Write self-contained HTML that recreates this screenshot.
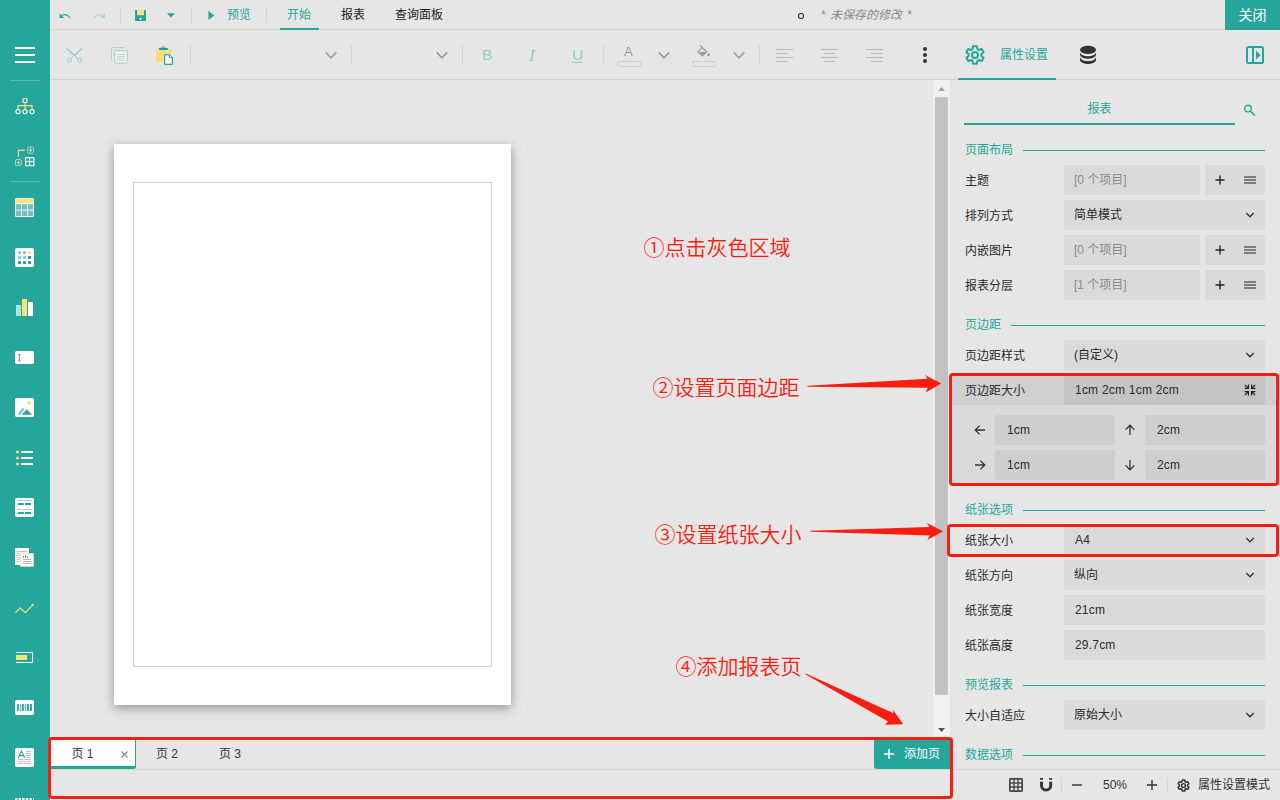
<!DOCTYPE html>
<html lang="zh-CN">
<head>
<meta charset="utf-8">
<title>报表设计器</title>
<style>
*{box-sizing:border-box;margin:0;padding:0}
html,body{width:1280px;height:800px;overflow:hidden;background:#e6e6e6}
body{position:relative;font-family:"Liberation Sans","Noto Sans CJK SC",sans-serif;font-size:13px;color:#333}
.abs{position:absolute}
svg{position:absolute;overflow:visible}
/* sidebar */
#side{position:absolute;left:0;top:0;width:50px;height:800px;background:#26a69a}
#side .sep{position:absolute;left:10px;width:30px;height:1px;background:rgba(255,255,255,.28)}
/* top bar */
#top{position:absolute;left:50px;top:0;width:1230px;height:30px;border-bottom:1px solid #d4d4d4}
#tool{position:absolute;left:50px;top:30px;width:902px;height:50px;border-bottom:1px solid #d4d4d4}
.vsep{position:absolute;width:1px;background:#d5d5d5}
.tab{position:absolute;top:0;height:30px;line-height:31px;font-size:12px;color:#222;white-space:nowrap}
.teal{color:#26a69a}
.pt{top:740px;height:28px;line-height:29px;font-size:12px;color:#333;white-space:nowrap}
.tb{top:14px;font-size:15.5px;line-height:22px;height:22px}
#close{position:absolute;left:1225px;top:0;width:55px;height:30px;background:#26a69a;color:#fff;font-size:14px;line-height:31px;text-align:center}
/* right panel */
#panel{position:absolute;left:952px;top:30px;width:328px;height:770px}
.sect{position:absolute;left:13px;font-size:12px;color:#26a69a;height:16px;line-height:16px;white-space:nowrap}
.sline{position:absolute;height:1px;background:#26a69a;right:15px}
.lbl{position:absolute;left:13px;font-size:12px;color:#2a2a2a;height:30px;line-height:33px;white-space:nowrap}
.fld{position:absolute;left:112px;width:201px;height:30px;background:#dadada;border-radius:2px;font-size:12px;line-height:31px;padding-left:10px;color:#2a2a2a;white-space:nowrap}
.fld.n{padding-left:11px;letter-spacing:.2px}
.fld.s{width:136px;color:#8a8a8a}
.btns{position:absolute;left:253px;width:60px;height:30px;background:#dadada;border-radius:2px}
/* annotation */
.ann{position:absolute;color:#fb1d10;font-family:"Liberation Sans","Noto Sans CJK SC",sans-serif;font-weight:350;font-size:21px;line-height:30px;white-space:nowrap;letter-spacing:0}
.rbox{position:absolute;border:3px solid #fb1d10;border-radius:4px}
</style>
</head>
<body>
<div id="side">
<svg style="left:0;top:0" width="50" height="800" viewBox="0 0 50 800">
<!-- hamburger -->
<path d="M15 48 H35 M15 55 H35 M15 62 H35" stroke="#fff" stroke-width="2"/>
<rect x="10" y="80" width="30" height="1" fill="#5bbdb3"/>
<!-- tree -->
<path d="M25 102.5 V109 M18 109.5 V105.6 H32 V109.5" stroke="#f8e27a" stroke-width="1.2" fill="none"/>
<g stroke="#fff" stroke-width="1.1" fill="none"><circle cx="25" cy="100.4" r="2.1"/><circle cx="18" cy="111.6" r="2.1"/><circle cx="25" cy="111.6" r="2.1"/><circle cx="32" cy="111.6" r="2.1"/></g>
<!-- add element -->
<path d="M18.4 157 V150.4 H24.8" stroke="#f8e27a" stroke-width="1.1" fill="none"/>
<rect x="27.6" y="147.2" width="6" height="6" rx="1.4" fill="none" stroke="#a6dad4" stroke-width="1"/>
<path d="M30.6 148.6 V151.8 M29 150.2 H32.2" stroke="#f8e27a" stroke-width="1.1"/>
<rect x="15.4" y="159.6" width="6" height="6" rx="1.4" fill="none" stroke="#a6dad4" stroke-width="1"/>
<path d="M18.4 161 V164.2 M16.8 162.6 H20" stroke="#f8e27a" stroke-width="1.1"/>
<rect x="25" y="157" width="9.4" height="9.2" fill="#fff"/>
<rect x="26.2" y="158.2" width="3" height="3" fill="#26a69a"/><rect x="30.3" y="158.2" width="3" height="3" fill="#26a69a"/><rect x="26.2" y="162.2" width="3" height="3" fill="#26a69a"/><rect x="30.3" y="162.2" width="3" height="3" fill="#26a69a"/>
<rect x="10" y="181" width="30" height="1" fill="#5bbdb3"/>
<!-- table -->
<rect x="15" y="198" width="19" height="19" rx="1.6" fill="#fff"/>
<rect x="16" y="199" width="17" height="4.2" fill="#f8e27a"/>
<g fill="#6cc3ba"><rect x="16" y="204.2" width="5" height="5.4"/><rect x="22" y="204.2" width="5" height="5.4"/><rect x="28" y="204.2" width="5" height="5.4"/><rect x="16" y="210.6" width="5" height="5.4"/><rect x="22" y="210.6" width="5" height="5.4"/><rect x="28" y="210.6" width="5" height="5.4"/></g>
<!-- tablix -->
<rect x="15" y="248" width="19" height="19" rx="1.8" fill="#fff"/>
<g><rect x="18.1" y="251.2" width="2.8" height="2.7" fill="#7fcbc3"/><rect x="23.1" y="251.2" width="2.8" height="2.7" fill="#7fcbc3"/><rect x="28.1" y="251.2" width="2.8" height="2.7" fill="#f8e27a"/>
<rect x="18.1" y="256.1" width="2.8" height="2.7" fill="#7fcbc3"/><rect x="23.1" y="256.1" width="2.8" height="2.7" fill="#7fcbc3"/><rect x="28.1" y="256.1" width="2.8" height="2.7" fill="#1d9488"/>
<rect x="18.1" y="261.2" width="2.8" height="2.7" fill="#1d9488"/><rect x="23.1" y="261.2" width="2.8" height="2.7" fill="#1d9488"/><rect x="28.1" y="261.2" width="2.8" height="2.7" fill="#1d9488"/></g>
<!-- chart -->
<rect x="16" y="305" width="5" height="11" fill="#b7e1dc"/><rect x="22" y="299" width="5" height="17" fill="#f8e27a"/><rect x="28" y="302" width="5" height="14" fill="#fff"/>
<!-- textbox -->
<rect x="15" y="351" width="19" height="13" rx="1.8" fill="#fff"/>
<path d="M18.2 354.6 H20.6 M18.2 360.8 H20.6 M19.4 354.6 V360.8" stroke="#6a6a6a" stroke-width="0.8" fill="none"/>
<!-- image -->
<rect x="15" y="398" width="19" height="19" rx="1.8" fill="#fff"/>
<circle cx="29" cy="403" r="2" fill="#f8e27a"/>
<path d="M17.4 414.8 L22.6 407.4 L24.4 409 L20.4 414.8 Z" fill="#7fcbc3"/><path d="M21.6 414.8 L26.9 409.2 L32 414.8 Z" fill="#26a69a"/>
<!-- list -->
<circle cx="17.5" cy="452" r="1.5" fill="#f8e27a"/><circle cx="17.5" cy="458" r="1.5" fill="#f8e27a"/><circle cx="17.5" cy="464" r="1.5" fill="#f8e27a"/>
<path d="M21 452 H33 M21 458 H33 M21 464 H33" stroke="#fff" stroke-width="2"/>
<!-- form -->
<rect x="15" y="498" width="19" height="19" rx="1.8" fill="#fff"/>
<path d="M17 500.5 H32 M17 509.5 H32" stroke="#b5b5b5" stroke-width="0.8"/>
<path d="M18 504 H23.8 M25 504 H31 M18 513 H23.8 M25 513 H31" stroke="#26a69a" stroke-width="2"/>
<!-- overflow -->
<rect x="15" y="548" width="14" height="17" fill="#fff"/>
<path d="M17 551.5 H27 M17 553.5 H20 M17 555.5 H20 M17 557.5 H20 M17 559.5 H20 M17 561.5 H20" stroke="#b5b5b5" stroke-width="0.8"/>
<rect x="20.5" y="553.5" width="13" height="13" fill="#fff" stroke="#f8e27a" stroke-width="1" stroke-dasharray="1.6 1"/>
<path d="M23.5 556 V557.8 M25.5 555.2 V557.8 M27.5 556.4 V557.8" stroke="#26a69a" stroke-width="1.1"/>
<path d="M23 559.5 H31 M23 561.5 H31 M23 563.5 H31" stroke="#a8a8a8" stroke-width="0.8"/>
<!-- sparkline -->
<path d="M15.3 612.8 L20.3 607.8 L25.3 612.6 L32.8 604.8" stroke="#f8e27a" stroke-width="1.1" fill="none"/><path d="M33.8 603.6 L33.4 606.4 L31.2 604.2 Z" fill="#f8e27a"/>
<!-- bullet -->
<path d="M16 652.5 H32.6 V662.5 H16" stroke="#fff" stroke-width="1" fill="none"/>
<rect x="16" y="655" width="11" height="5" fill="#f8e27a"/>
<!-- barcode -->
<rect x="15" y="700" width="19" height="15" rx="1.8" fill="#fff"/>
<g fill="#26a69a"><rect x="17.1" y="704" width="1.7" height="7"/><rect x="19.8" y="704" width="0.9" height="7"/><rect x="21.9" y="704" width="1.9" height="7"/><rect x="24.8" y="704" width="0.9" height="7"/><rect x="26.9" y="704" width="1.9" height="7"/><rect x="30" y="704" width="1.9" height="7"/></g>
<!-- richtext -->
<rect x="15" y="748" width="19" height="19" rx="1.8" fill="#fff"/>
<path d="M18.3 757.8 L21.5 751 L24.7 757.8 M19.4 755.6 H23.6" stroke="#26a69a" stroke-width="1.1" fill="none"/>
<path d="M26 751.5 H31 M26 753.5 H31 M26 755.5 H31 M26 757.5 H31 M18 759.5 H31 M18 761.5 H31 M18 763.5 H31" stroke="#b5b5b5" stroke-width="0.8"/>
<path d="M15 799 H34" stroke="#fff" stroke-width="2" stroke-dasharray="2.4 1.2"/>
</svg>
</div>
<div id="top">
<svg style="left:9px;top:12px" width="12" height="7" viewBox="0 0 12 7"><path d="M0.500 1.300 V5.900 H5.200 Z" fill="#26a69a"/><path d="M2.800 3.300 C5.500 2.200 8.600 2.300 10.800 5.800" stroke="#26a69a" stroke-width="1.100" fill="none"/></svg>
<svg style="left:44px;top:12px" width="12" height="7" viewBox="0 0 12 7"><path d="M10.900 1.300 V5.900 H6.200 Z" fill="#a3d5cf"/><path d="M8.600 3.300 C5.900 2.200 2.800 2.300 0.600 5.800" stroke="#a3d5cf" stroke-width="1.200" fill="none"/></svg>
<div class="vsep" style="left:70px;top:8px;height:15px"></div>
<svg style="left:85px;top:10px" width="11" height="11" viewBox="0 0 11 11"><rect x="0" y="0" width="11" height="11" rx="0.8" fill="#26a69a"/><rect x="2" y="0" width="7" height="5.2" fill="#f8e27a"/><rect x="3.6" y="7.4" width="3.8" height="3.6" fill="#26a69a"/><circle cx="5.5" cy="8.8" r="1.1" fill="#fff"/></svg>
<svg style="left:117px;top:13px" width="8" height="5" viewBox="0 0 8 5"><path d="M0 0.2 H8 L4 4.4Z" fill="#26a69a"/></svg>
<div class="vsep" style="left:141px;top:8px;height:15px"></div>
<svg style="left:158px;top:11px" width="7" height="9" viewBox="0 0 7 9"><path d="M0.4 0 L6.4 4.4 L0.4 8.8Z" fill="#26a69a"/></svg>
<div class="tab teal" style="left:177px">预览</div>
<div class="vsep" style="left:216px;top:8px;height:15px"></div>
<div class="tab teal" style="left:237px">开始</div>
<div class="abs" style="left:229.500px;top:28px;width:39px;height:2px;background:#26a69a"></div>
<div class="tab" style="left:291px">报表</div>
<div class="tab" style="left:345px">查询面板</div>
<div class="abs" style="left:747.700px;top:12.600px;width:6.300px;height:6.500px;border:1.300px solid #222;border-radius:50%"></div>
<div class="tab" style="left:770px;color:#8a8a8a;font-style:italic;font-weight:400;word-spacing:1.500px;left:770.500px">* 未保存的修改 *</div>
</div>
<div id="close">关闭</div>
<div id="tool">
<svg style="left:16px;top:17px" width="17" height="17" viewBox="0 0 17 17"><g fill="#8fccc5"><path d="M0.800 0.700 L0.800 2.500 L7.500 8.700 L8.900 7.900 Z"/><path d="M15.900 0.700 L15.900 2.500 L9.200 8.700 L7.800 7.900 Z"/></g><g stroke="#8fccc5" stroke-width="0.900" fill="none"><path d="M8 7.900 L12 11.700 M8.700 7.900 L4.700 11.700"/><circle cx="3.400" cy="13.400" r="2"/><circle cx="13.400" cy="13.400" r="2"/></g></svg>
<svg style="left:61px;top:17px" width="18" height="18" viewBox="0 0 18 18"><path d="M0.500 13.600 V0.500 H14" stroke="#a9d8d2" stroke-width="1" fill="none"/><rect x="3.750" y="3.600" width="12.500" height="12.600" rx="0.600" fill="#f0f0f0" stroke="#9dd3cc" stroke-width="1"/><path d="M5.900 7.500 H14 M5.900 9.550 H14 M5.900 11.550 H14 M5.900 13.500 H14" stroke="#c9c9c9" stroke-width="0.900"/></svg>
<svg style="left:106px;top:15px" width="18" height="21" viewBox="0 0 18 21"><rect x="0" y="3" width="15" height="13.900" fill="#f7df7b"/><rect x="2.400" y="2.800" width="10.200" height="2.800" fill="#e6e6e6"/><path d="M3 4.900 V3 H5 A2.400 2.200 0 0 1 9.700 3 H11.800 V4.900 Z" fill="#1f9e92"/><ellipse cx="7.350" cy="2.500" rx="1.200" ry="0.600" fill="#e6e6e6"/><path d="M9.600 9 H13 L17.100 12.800 V18.600 A1.400 1.400 0 0 1 15.700 20 H9.300 A1.400 1.400 0 0 1 7.900 18.600 V10.400 A1.400 1.400 0 0 1 9.300 9 Z" fill="#e9e4d0" stroke="#e9e4d0" stroke-width="1"/><path d="M9.600 9.650 H12.900 L16.450 13 V18.300 A1 1 0 0 1 15.450 19.350 H9.550 A1 1 0 0 1 8.550 18.300 V10.650 A1 1 0 0 1 9.550 9.650 Z" fill="#fff" stroke="#26a69a" stroke-width="1.300" stroke-linejoin="round"/><path d="M12.900 9.650 V12.100 A0.900 0.900 0 0 0 13.800 13 H16.450 Z" fill="#26a69a"/><circle cx="14.400" cy="11.700" r="0.700" fill="#fff"/></svg>
<div class="vsep" style="left:140px;top:15px;height:20px"></div>
<svg style="left:275px;top:21px" width="12" height="8" viewBox="0 0 12 8"><path d="M0.700 1.400 L6 6.900 L11.300 1.400" stroke="#9b9b9b" stroke-width="1.700" fill="none"/></svg>
<div class="vsep" style="left:301px;top:15px;height:20px"></div>
<svg style="left:386px;top:21px" width="12" height="8" viewBox="0 0 12 8"><path d="M0.700 1.400 L6 6.900 L11.300 1.400" stroke="#9b9b9b" stroke-width="1.700" fill="none"/></svg>
<div class="vsep" style="left:412px;top:15px;height:20px"></div>
<div class="abs tb" style="left:432px;color:#8fccc5">B</div>
<div class="abs tb" style="left:479px;top:15px;color:#8fccc5;font-family:'Liberation Serif',serif;font-style:italic;font-size:17px">I</div>
<div class="abs tb" style="left:522px;color:#8fccc5">U</div>
<div class="abs" style="left:522px;top:32px;width:11px;height:1px;background:#8fccc5"></div>
<div class="vsep" style="left:553px;top:15px;height:20px"></div>
<div class="abs tb" style="left:574px;color:#9b9b9b;font-size:13px;top:11px">A</div>
<div class="abs" style="left:567px;top:31px;width:24px;height:6px;border:1px dotted #b9b9b9;border-radius:2px"></div>
<svg style="left:608px;top:21px" width="12" height="8" viewBox="0 0 12 8"><path d="M0.700 1.400 L6 6.900 L11.300 1.400" stroke="#9b9b9b" stroke-width="1.700" fill="none"/></svg>
<svg style="left:647px;top:15px" width="14" height="12" viewBox="0 0 14 12"><path d="M3 0.4 L9.6 6.8 L5.4 10.8 L1 6.6 L5.2 2.6" stroke="#9b9b9b" stroke-width="1.2" fill="none" stroke-linejoin="round"/><path d="M1.6 6.9 H9.3 L5.4 10.6 Z" fill="#9b9b9b"/><path d="M11.6 7.6 C12.4 8.8 12.8 9.4 12.8 10 A1.2 1.2 0 0 1 10.4 10 C10.4 9.4 10.8 8.8 11.6 7.6Z" fill="#9b9b9b"/></svg>
<div class="abs" style="left:642px;top:31px;width:24px;height:6px;border:1px dotted #b9b9b9;border-radius:2px"></div>
<svg style="left:683px;top:21px" width="12" height="8" viewBox="0 0 12 8"><path d="M0.700 1.400 L6 6.900 L11.300 1.400" stroke="#9b9b9b" stroke-width="1.700" fill="none"/></svg>
<div class="vsep" style="left:709px;top:15px;height:20px"></div>
<svg style="left:726px;top:19px" width="17" height="13" viewBox="0 0 17 13"><path d="M0 0.5 H17 M0 4.5 H12 M0 8.5 H17 M0 12.5 H12" stroke="#b8b8b8" stroke-width="1"/></svg>
<svg style="left:771px;top:19px" width="17" height="13" viewBox="0 0 17 13"><path d="M0 0.5 H17 M3 4.5 H14 M0 8.5 H17 M3 12.5 H14" stroke="#b8b8b8" stroke-width="1"/></svg>
<svg style="left:816px;top:19px" width="17" height="13" viewBox="0 0 17 13"><path d="M0 0.5 H17 M5 4.5 H17 M0 8.5 H17 M5 12.5 H17" stroke="#b8b8b8" stroke-width="1"/></svg>
<svg style="left:872px;top:17px" width="6" height="16" viewBox="0 0 6 16"><circle cx="3" cy="2" r="2" fill="#333"/><circle cx="3" cy="8" r="2" fill="#333"/><circle cx="3" cy="14" r="2" fill="#333"/></svg>
</div>
<div id="canvas">
<div class="abs" style="left:114px;top:144px;width:397px;height:561px;background:#fff;box-shadow:0 3px 10px rgba(0,0,0,.36)"></div>
<div class="abs" style="left:133px;top:182px;width:359px;height:485px;border:1px solid #d0d0d0"></div>
<div class="abs" style="left:933px;top:80px;width:17px;height:657px;background:#f1f1f1"></div>
<div class="abs" style="left:935px;top:97px;width:13px;height:598px;background:#c1c1c1"></div>
<svg style="left:933px;top:80px" width="17" height="17"><path d="M5 11 L8.5 7 L12 11Z" fill="#a3a3a3"/></svg>
<svg style="left:933px;top:720px" width="17" height="17"><path d="M5 8 L12 8 L8.5 12Z" fill="#505050"/></svg>
</div>
<div id="panel">
<div class="abs" style="left:0;top:49px;width:328px;height:1px;background:#d4d4d4"></div>
<svg style="left:13px;top:15px" width="20" height="20" viewBox="0 0 20 20"><path d="M7.50 4.22 L8.10 1.20 L11.90 1.20 L12.50 4.22 A6.30 6.30 0 0 1 13.76 4.94 L16.67 3.96 L18.57 7.25 L16.26 9.27 A6.30 6.30 0 0 1 16.26 10.73 L18.57 12.75 L16.67 16.04 L13.76 15.06 A6.30 6.30 0 0 1 12.50 15.78 L11.90 18.80 L8.10 18.80 L7.50 15.78 A6.30 6.30 0 0 1 6.24 15.06 L3.33 16.04 L1.43 12.75 L3.74 10.73 A6.30 6.30 0 0 1 3.74 9.27 L1.43 7.25 L3.33 3.96 L6.24 4.94 A6.30 6.30 0 0 1 7.50 4.22 Z" fill="none" stroke="#26a69a" stroke-width="2" stroke-linejoin="round"/><circle cx="10" cy="10" r="3" fill="none" stroke="#26a69a" stroke-width="2"/></svg>
<div class="abs teal" style="left:48px;top:15px;height:20px;line-height:21px;font-size:12px">属性设置</div>
<div class="abs" style="left:6px;top:48px;width:98px;height:2px;background:#26a69a"></div>
<svg style="left:128px;top:15px" width="16" height="20" viewBox="0 0 16 20"><ellipse cx="8" cy="4.900" rx="8" ry="4.100" fill="#333"/><path d="M0 7.200 A8 4.100 0 0 0 16 7.200 V9.650 A8 4.100 0 0 1 0 9.650 Z" fill="#333"/><path d="M0 12 A8 4.100 0 0 0 16 12 V14.900 A8 4.100 0 0 1 0 14.900 Z" fill="#333"/></svg>
<svg style="left:294px;top:16px" width="18" height="18" viewBox="0 0 18 18"><rect x="1" y="1" width="16" height="16" rx="1.6" fill="none" stroke="#26a69a" stroke-width="2"/><path d="M7 1 V17" stroke="#26a69a" stroke-width="2"/><path d="M10 4.600 L14.600 9 L10 13.400Z" fill="#26a69a"/></svg>
<div class="abs teal" style="left:12px;top:69px;width:271px;height:20px;line-height:21px;font-size:12px;text-align:center">报表</div>
<div class="abs" style="left:12px;top:93px;width:271px;height:2px;background:#26a69a"></div>
<svg style="left:291px;top:74px" width="13" height="13" viewBox="0 0 13 13"><circle cx="5" cy="4.600" r="3.300" fill="none" stroke="#26a69a" stroke-width="1.400"/><path d="M7.400 7.200 L12 11.600" stroke="#26a69a" stroke-width="1.500"/></svg>
<div class="sect" style="top:112px">页面布局</div><div class="sline" style="left:71.0px;top:120px"></div>
<div class="lbl" style="top:135px">主题</div><div class="fld s" style="top:135px">[0 个项目]</div><div class="btns" style="top:135px"></div><svg style="left:263px;top:145px" width="10" height="10" viewBox="0 0 10 10"><path d="M5 0.500 V9.500 M0.500 5 H9.500" stroke="#222" stroke-width="1.400"/></svg><svg style="left:292px;top:146px" width="12" height="8" viewBox="0 0 12 8"><path d="M0 1 H12 M0 4 H12 M0 7 H12" stroke="#222" stroke-width="1.050"/></svg>
<div class="lbl" style="top:170px">排列方式</div><div class="fld" style="top:170px">简单模式</div><svg style="left:293px;top:182px" width="10" height="6" viewBox="0 0 10 6"><path d="M1.200 1 L5 4.800 L8.800 1" stroke="#333" stroke-width="1.300" fill="none"/></svg>
<div class="lbl" style="top:205px">内嵌图片</div><div class="fld s" style="top:205px">[0 个项目]</div><div class="btns" style="top:205px"></div><svg style="left:263px;top:215px" width="10" height="10" viewBox="0 0 10 10"><path d="M5 0.500 V9.500 M0.500 5 H9.500" stroke="#222" stroke-width="1.400"/></svg><svg style="left:292px;top:216px" width="12" height="8" viewBox="0 0 12 8"><path d="M0 1 H12 M0 4 H12 M0 7 H12" stroke="#222" stroke-width="1.050"/></svg>
<div class="lbl" style="top:240px">报表分层</div><div class="fld s" style="top:240px">[1 个项目]</div><div class="btns" style="top:240px"></div><svg style="left:263px;top:250px" width="10" height="10" viewBox="0 0 10 10"><path d="M5 0.500 V9.500 M0.500 5 H9.500" stroke="#222" stroke-width="1.400"/></svg><svg style="left:292px;top:251px" width="12" height="8" viewBox="0 0 12 8"><path d="M0 1 H12 M0 4 H12 M0 7 H12" stroke="#222" stroke-width="1.050"/></svg>
<div class="sect" style="top:287px">页边距</div><div class="sline" style="left:59.0px;top:295px"></div>
<div class="lbl" style="top:310px">页边距样式</div><div class="fld" style="top:310px">(自定义)</div><svg style="left:293px;top:322px" width="10" height="6" viewBox="0 0 10 6"><path d="M1.200 1 L5 4.800 L8.800 1" stroke="#333" stroke-width="1.300" fill="none"/></svg>
<div class="abs" style="left:-2px;top:345px;width:330px;height:30px;background:#d0d0d0"></div>
<div class="abs" style="left:-2px;top:375px;width:330px;height:79px;background:#dadada"></div>
<div class="lbl" style="top:345px">页边距大小</div><div class="fld" style="top:345px;background:#c4c4c4;border-radius:0;padding-left:11px;letter-spacing:.22px">1cm 2cm 1cm 2cm</div>
<svg style="left:292px;top:354px" width="12" height="12" viewBox="0 0 12 12"><path d="M0.600 4.400 H4.400 V0.600 M4.400 4.400 L0.800 0.800 M11.400 4.400 H7.600 V0.600 M7.600 4.400 L11.200 0.800 M0.600 7.600 H4.400 V11.400 M4.400 7.600 L0.800 11.200 M11.400 7.600 H7.600 V11.400 M7.600 7.600 L11.200 11.200" stroke="#222" stroke-width="1.200" fill="none"/></svg>
<div class="fld" style="left:43px;top:385px;width:120px;background:#cecece;padding-left:12px;letter-spacing:.2px">1cm</div><div class="fld" style="left:193px;top:385px;width:120px;background:#cecece;padding-left:12px;letter-spacing:.2px">2cm</div><div class="fld" style="left:43px;top:420px;width:120px;background:#cecece;padding-left:12px;letter-spacing:.2px">1cm</div><div class="fld" style="left:193px;top:420px;width:120px;background:#cecece;padding-left:12px;letter-spacing:.2px">2cm</div>
<svg style="left:22px;top:394px" width="12" height="12" viewBox="0 0 12 12"><g transform="rotate(0 6 6)"><path d="M11 6 H1.400 M5.600 1.600 L1.200 6 L5.600 10.400" stroke="#333" stroke-width="1.300" fill="none"/></g></svg><svg style="left:172px;top:394px" width="12" height="12" viewBox="0 0 12 12"><g transform="rotate(90 6 6)"><path d="M11 6 H1.400 M5.600 1.600 L1.200 6 L5.600 10.400" stroke="#333" stroke-width="1.300" fill="none"/></g></svg><svg style="left:22px;top:429px" width="12" height="12" viewBox="0 0 12 12"><g transform="rotate(180 6 6)"><path d="M11 6 H1.400 M5.600 1.600 L1.200 6 L5.600 10.400" stroke="#333" stroke-width="1.300" fill="none"/></g></svg><svg style="left:172px;top:429px" width="12" height="12" viewBox="0 0 12 12"><g transform="rotate(270 6 6)"><path d="M11 6 H1.400 M5.600 1.600 L1.200 6 L5.600 10.400" stroke="#333" stroke-width="1.300" fill="none"/></g></svg>
<div class="sect" style="top:472px">纸张选项</div><div class="sline" style="left:71.0px;top:480px"></div>
<div class="lbl" style="top:495px">纸张大小</div><div class="fld n" style="top:495px">A4</div><svg style="left:293px;top:507px" width="10" height="6" viewBox="0 0 10 6"><path d="M1.200 1 L5 4.800 L8.800 1" stroke="#333" stroke-width="1.300" fill="none"/></svg>
<div class="lbl" style="top:530px">纸张方向</div><div class="fld" style="top:530px">纵向</div><svg style="left:293px;top:542px" width="10" height="6" viewBox="0 0 10 6"><path d="M1.200 1 L5 4.800 L8.800 1" stroke="#333" stroke-width="1.300" fill="none"/></svg>
<div class="lbl" style="top:565px">纸张宽度</div><div class="fld n" style="top:565px">21cm</div>
<div class="lbl" style="top:600px">纸张高度</div><div class="fld n" style="top:600px">29.7cm</div>
<div class="sect" style="top:647px">预览报表</div><div class="sline" style="left:71.0px;top:655px"></div>
<div class="lbl" style="top:670px">大小自适应</div><div class="fld" style="top:670px">原始大小</div><svg style="left:293px;top:682px" width="10" height="6" viewBox="0 0 10 6"><path d="M1.200 1 L5 4.800 L8.800 1" stroke="#333" stroke-width="1.300" fill="none"/></svg>
<div class="sect" style="top:717px">数据选项</div><div class="sline" style="left:71.0px;top:725px"></div>
<div class="abs" style="left:0;top:740px;width:328px;height:30px;background:#e6e6e6"></div>
<div class="abs" style="left:-2px;top:739px;width:330px;height:1px;background:#d4d4d4"></div>
<svg style="left:57px;top:748px" width="14" height="14" viewBox="0 0 14 14"><rect x="0" y="0" width="14" height="14" rx="1.400" fill="#444"/><g fill="#e6e6e6"><rect x="1.700" y="1.700" width="2.600" height="2.600"/><rect x="5.700" y="1.700" width="2.600" height="2.600"/><rect x="9.700" y="1.700" width="2.600" height="2.600"/><rect x="1.700" y="5.700" width="2.600" height="2.600"/><rect x="5.700" y="5.700" width="2.600" height="2.600"/><rect x="9.700" y="5.700" width="2.600" height="2.600"/><rect x="1.700" y="9.700" width="2.600" height="2.600"/><rect x="5.700" y="9.700" width="2.600" height="2.600"/><rect x="9.700" y="9.700" width="2.600" height="2.600"/></g></svg>
<svg style="left:88px;top:748px" width="12.2" height="13.600" viewBox="0 0 12.2 13.600"><path d="M1.500 3.800 V7.400 A4.600 4.600 0 0 0 10.700 7.400 V3.800" stroke="#333" stroke-width="2.900" fill="none"/><path d="M0.050 0 H2.950 V1.800 H0.050Z M9.250 0 H12.150 V1.800 H9.250Z" fill="#333"/></svg>
<div class="vsep" style="left:109px;top:748px;height:14px"></div>
<svg style="left:120px;top:754px" width="10" height="2"><rect width="10" height="1.400" y="0.300" fill="#333"/></svg>
<div class="abs" style="left:146px;top:745px;width:34px;height:20px;line-height:21px;font-size:12px;text-align:center;color:#333">50%</div>
<svg style="left:195px;top:750px" width="10" height="10" viewBox="0 0 10 10"><path d="M5 0 V10 M0 5 H10" stroke="#333" stroke-width="1.400"/></svg>
<div class="vsep" style="left:215px;top:748px;height:14px"></div>
<svg style="left:225px;top:749px" width="13" height="13" viewBox="0 0 13 13"><path d="M4.90 2.83 L5.30 0.93 L7.70 0.93 L8.10 2.83 A4.00 4.00 0 0 1 8.87 3.28 L10.73 2.67 L11.93 4.75 L10.47 6.05 A4.00 4.00 0 0 1 10.47 6.95 L11.93 8.25 L10.73 10.33 L8.87 9.72 A4.00 4.00 0 0 1 8.10 10.17 L7.70 12.07 L5.30 12.07 L4.90 10.17 A4.00 4.00 0 0 1 4.13 9.72 L2.27 10.33 L1.07 8.25 L2.53 6.95 A4.00 4.00 0 0 1 2.53 6.05 L1.07 4.75 L2.27 2.67 L4.13 3.28 A4.00 4.00 0 0 1 4.90 2.83 Z" fill="none" stroke="#333" stroke-width="1.5" stroke-linejoin="round"/><circle cx="6.5" cy="6.5" r="1.9" fill="none" stroke="#333" stroke-width="1.4"/></svg>
<div class="abs" style="left:246px;top:745px;height:20px;line-height:21px;font-size:12px;color:#333;white-space:nowrap">属性设置模式</div>
</div>
<div id="bottom">
<div class="abs" style="left:50px;top:769px;width:1230px;height:1px;background:#d4d4d4"></div>
<div class="abs" style="left:51px;top:740px;width:85px;height:29px;background:#fff;border-bottom:3px solid #26a69a;border-right:1px solid #26a69a;border-radius:0 0 2px 0"></div>
<div class="abs pt" style="left:71.500px">页 1</div>
<svg style="left:121px;top:751px" width="7" height="7"><path d="M0.500 0.500 L6.500 6.500 M6.500 0.500 L0.500 6.500" stroke="#8c8c8c" stroke-width="1.200" fill="none"/></svg>
<div class="abs pt" style="left:156px">页 2</div>
<div class="abs pt" style="left:219px">页 3</div>
<div class="abs" style="left:874px;top:740px;width:76px;height:29px;background:#26a69a;border-radius:0 0 0 3px"></div>
<svg style="left:883px;top:748px" width="12" height="12"><path d="M6 1 V11 M1 6 H11" stroke="#fff" stroke-width="1.6" fill="none"/></svg>
<div class="abs" style="left:904px;top:740px;height:28px;line-height:28px;font-size:12px;color:#fff">添加页</div>
</div>
<div id="anno">
<div class="rbox" style="left:949px;top:373px;width:330px;height:113px"></div>
<div class="rbox" style="left:947px;top:524px;width:332px;height:33px"></div>
<div class="rbox" style="left:48px;top:737px;width:905px;height:62px"></div>
<svg style="left:0;top:0" width="1280" height="800" viewBox="0 0 1280 800"><g fill="#fb1d10">
<path d="M807.500 385.800 L927.500 378.700 L925 375 L941.300 383.400 L925.600 392.500 L927.800 387.800 L807.500 386.700Z"/>
<path d="M810.600 530.800 L929.400 526.900 L926.900 523.100 L943.100 531.300 L927.300 540 L929.800 535.600 L810.600 531.700Z"/>
<path d="M805.800 673.500 L893.600 713.300 L892.600 709.300 L903.200 724.200 L885 724.700 L888 721.400 L805.300 674.300Z"/>
</g></svg>
<div class="ann" style="left:643.500px;top:233px">①点击灰色区域</div>
<div class="ann" style="left:652.500px;top:373px">②设置页面边距</div>
<div class="ann" style="left:654.500px;top:520px">③设置纸张大小</div>
<div class="ann" style="left:675.500px;top:652px">④添加报表页</div>
</div>
</body>
</html>
